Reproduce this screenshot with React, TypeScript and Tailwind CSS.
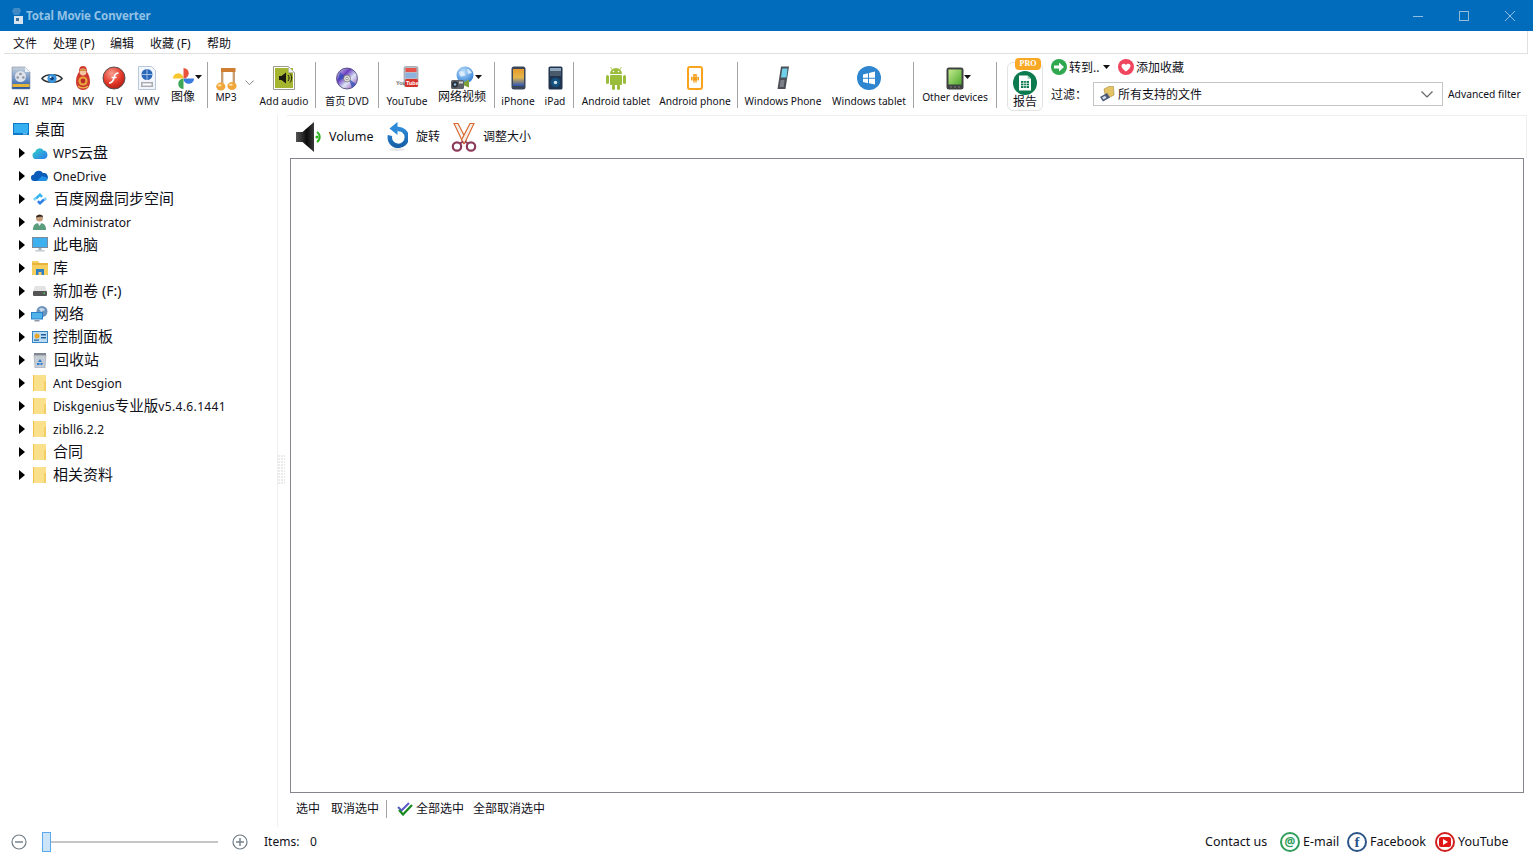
import React from "react";

const Caret = ({ className = "" }: { className?: string }) => (
  <svg width="7" height="4" viewBox="0 0 7 4" className={className}><path d="M0 0h7L3.500 4z" fill="#111" /></svg>
);

const Avi = () => (
  <svg width="20" height="24" viewBox="0 0 20 24">
    <defs><linearGradient id="av" x1="0" y1="0" x2="0" y2="1"><stop offset="0" stopColor="#c9d2dc" /><stop offset="0.55" stopColor="#6f93c6" /><stop offset="1" stopColor="#1f4f9c" /></linearGradient></defs>
    <path d="M1 1h13l5 5v17H1z" fill="url(#av)" stroke="#7f8ea3" strokeWidth=".6" />
    <path d="M14 1v5h5z" fill="#eef1f5" />
    <circle cx="9.500" cy="10.500" r="5.500" fill="#dfe3e8" />
    <circle cx="9.500" cy="8" r="1.300" fill="#8e97a3" /><circle cx="6.700" cy="11.500" r="1.300" fill="#8e97a3" /><circle cx="12.300" cy="11.500" r="1.300" fill="#8e97a3" />
    <rect x="1.500" y="18" width="17" height="3" fill="#e5b53a" />
  </svg>
);
const Eye = () => (
  <svg width="22" height="13" viewBox="0 0 24 14">
    <path d="M1 7C5 1.500 19 1.500 23 7 19 12.500 5 12.500 1 7z" fill="#fff" stroke="#333" strokeWidth="1.600" />
    <circle cx="12" cy="7" r="5" fill="#3a94dc" /><circle cx="12" cy="7" r="2" fill="#0d3f7a" /><circle cx="10.500" cy="5.500" r="1" fill="#fff" />
  </svg>
);
const Mkv = () => (
  <svg width="14" height="24" viewBox="0 0 14 24">
    <path d="M7 0C3.500 0 3 3 3 6 1.500 8 0 11 0 16c0 5 3 8 7 8s7-3 7-8c0-5-1.500-8-3-10 0-3-.5-6-4-6z" fill="#cf3a2e" />
    <circle cx="7" cy="6" r="3.400" fill="#f3c6a4" /><path d="M3.600 5C4 2.600 10 2.600 10.400 5z" fill="#d28a2c" />
    <ellipse cx="7" cy="15" rx="4.600" ry="4.600" fill="#e9a33b" /><circle cx="7" cy="15" r="2.400" fill="#b92c2a" />
    <path d="M2 20c2 2.400 8 2.400 10 0" stroke="#e9b54d" strokeWidth="1.200" fill="none" />
  </svg>
);
const Flv = () => (
  <svg width="24" height="24" viewBox="0 0 24 24">
    <defs><radialGradient id="fl" cx=".4" cy=".3" r=".8"><stop offset="0" stopColor="#f8a090" /><stop offset=".55" stopColor="#e5392a" /><stop offset="1" stopColor="#a5160f" /></radialGradient></defs>
    <circle cx="12" cy="12" r="11" fill="url(#fl)" stroke="#555" strokeWidth="1" />
    <path d="M7 17c3.500 0 4.500-2.500 5.200-6 .5-2.500 1.800-4 4.300-4M9.500 11.500h5" stroke="#fff" strokeWidth="1.500" fill="none" />
  </svg>
);
const Wmv = () => (
  <svg width="18" height="24" viewBox="0 0 18 24">
    <path d="M.5.5h13l4 4v19H.5z" fill="#f2f5f9" stroke="#b8c7dc" />
    <circle cx="9" cy="8.500" r="5.500" fill="#2d67b8" /><path d="M9 3v11M3.500 8.500h11" stroke="#bcd6f3" strokeWidth=".8" />
    <rect x="3" y="16" width="12" height="5" fill="#a9adb3" /><rect x="4.500" y="17.500" width="9" height="2" fill="#fff" />
  </svg>
);
const Pinwheel = () => (
  <svg width="23" height="23" viewBox="0 0 24 24">
    <path d="M12 12V1a5.500 5.500 0 0 1 0 11z" fill="#e8523c" />
    <path d="M12 12h11a5.500 5.500 0 0 1-11 0z" fill="#3a7be0" />
    <path d="M12 12v11a5.500 5.500 0 0 1 0-11z" fill="#3fa857" />
    <path d="M12 12H1a5.500 5.500 0 0 1 11 0z" fill="#f7c52d" />
  </svg>
);
const Mp3 = () => (
  <svg width="21" height="25" viewBox="0 0 21 25">
    <path d="M5 3h14v17h-2.400V5.500H7.400V21H5z" fill="#c9a074" /><rect x="5" y="2" width="14.500" height="4" fill="#d07f32" />
    <ellipse cx="4.800" cy="20.500" rx="4.600" ry="4" fill="#f0a63a" /><ellipse cx="16" cy="20" rx="4.600" ry="4" fill="#f0a63a" />
    <ellipse cx="3.600" cy="19.300" rx="1.800" ry="1.200" fill="#fbdc9b" /><ellipse cx="14.800" cy="18.800" rx="1.800" ry="1.200" fill="#fbdc9b" />
  </svg>
);
const AddAudio = () => (
  <svg width="22" height="24" viewBox="0 0 22 24">
    <path d="M.5.500h15l6 6v17H.500z" fill="#fff" stroke="#9a9a8a" />
    <rect x="2" y="2" width="18" height="20" fill="#a6b52f" /><path d="M15.500.500v6h6z" fill="#eee" stroke="#aaa" strokeWidth=".5" />
    <path d="M6 10h2.500L13 6.500v11L8.500 14H6z" fill="#1a1a10" />
    <path d="M15 9c1.400 1.500 1.400 4.500 0 6M17 7.500c2.200 2.400 2.200 6.600 0 9" stroke="#1a1a10" strokeWidth="1" fill="none" />
  </svg>
);
const Dvd = () => (
  <svg width="22" height="23" viewBox="0 0 22 23">
    <defs><linearGradient id="dv" x1="0" y1="0" x2="1" y2="1"><stop offset="0" stopColor="#e8e8f4" /><stop offset=".35" stopColor="#6a3fc0" /><stop offset=".6" stopColor="#dfe7f7" /><stop offset="1" stopColor="#7a2aa8" /></linearGradient></defs>
    <circle cx="11" cy="11.500" r="10.500" fill="url(#dv)" stroke="#3c3c70" strokeWidth=".8" />
    <path d="M4 5l6 6-8 2zM13 12l7 5-4 4z" fill="#2b4fb8" opacity=".75" />
    <circle cx="11" cy="11.500" r="3.500" fill="#ddd" stroke="#555" strokeWidth=".6" /><circle cx="11" cy="11.500" r="1.300" fill="#fff" stroke="#444" strokeWidth=".5" />
  </svg>
);
const YtDevice = () => (
  <svg width="24" height="24" viewBox="0 0 24 24">
    <rect x="9" y="0.500" width="14" height="20" rx="1.500" fill="#b9bec6" stroke="#8a8f99" strokeWidth=".6" />
    <rect x="10.500" y="2" width="11" height="4" fill="#e6534a" /><rect x="10.500" y="7" width="11" height="5" fill="#8cb2dd" />
    <text x="1" y="18.700" fontSize="5.500" fontWeight="700" fill="#666" fontFamily="Liberation Sans">You</text>
    <rect x="10" y="13" width="13" height="8" rx="1.500" fill="#d8332b" />
    <text x="11" y="19" fontSize="5.500" fontWeight="700" fill="#fff" fontFamily="Liberation Sans">Tube</text>
  </svg>
);
const WebVideo = () => (
  <svg width="25" height="24" viewBox="0 0 25 24">
    <defs><radialGradient id="gb" cx=".4" cy=".3" r=".8"><stop offset="0" stopColor="#bfe0fb" /><stop offset="1" stopColor="#1f74d2" /></radialGradient></defs>
    <circle cx="15" cy="9" r="8.500" fill="url(#gb)" />
    <path d="M9 6c3-2 5 0 6 2s-3 3-5 2zM17 3c2 0 4 2 5 4l-4 1z" fill="#e3f1ff" opacity=".85" />
    <rect x="1" y="14" width="13" height="9" rx="1.500" fill="#5c6068" /><circle cx="5" cy="18.500" r="3" fill="#2a2d33" /><circle cx="5" cy="18.500" r="1.300" fill="#8ab8e0" />
    <path d="M14 16l5-2.500v8L14 19.500z" fill="#7fa03a" />
    <rect x="9" y="15.500" width="4" height="2" fill="#cfd3d9" />
  </svg>
);
const Iphone = () => (
  <svg width="15" height="24" viewBox="0 0 15 24">
    <defs><linearGradient id="ip" x1="0" y1="0" x2="0" y2="1"><stop offset="0" stopColor="#e89a2b" /><stop offset=".5" stopColor="#e5b64a" /><stop offset="1" stopColor="#2a54b5" /></linearGradient></defs>
    <rect x=".5" y=".5" width="14" height="23" rx="2.500" fill="#3a4658" /><rect x="2" y="3" width="11" height="17" fill="url(#ip)" />
  </svg>
);
const Ipad = () => (
  <svg width="15" height="24" viewBox="0 0 15 24">
    <rect x=".5" y=".5" width="14" height="23" rx="1.500" fill="#20344f" />
    <rect x="2" y="2" width="11" height="8" fill="#4a5a6a" /><rect x="2" y="2" width="11" height="3" fill="#90a6bd" />
    <circle cx="7.500" cy="16.500" r="4.800" fill="#16507d" /><circle cx="7.500" cy="16.500" r="1.800" fill="#cfe1f0" />
  </svg>
);
const AndroidBot = ({ color, w, h }: { color: string; w: number; h: number }) => (
  <svg width={w} height={h} viewBox="0 0 20 24">
    <path d="M4 8a6 6 0 0 1 12 0z" fill={color} /><path d="M6 3.500L4.500 1M14 3.500L15.500 1" stroke={color} strokeWidth=".8" />
    <circle cx="7.500" cy="5.500" r=".8" fill="#fff" /><circle cx="12.500" cy="5.500" r=".8" fill="#fff" />
    <rect x="4" y="9" width="12" height="10" rx="1" fill={color} />
    <rect x="0" y="9" width="3" height="9" rx="1.500" fill={color} /><rect x="17" y="9" width="3" height="9" rx="1.500" fill={color} />
    <rect x="6" y="18" width="3" height="6" rx="1.500" fill={color} /><rect x="11" y="18" width="3" height="6" rx="1.500" fill={color} />
  </svg>
);
const AndroidPhone = () => (
  <div className="relative w-[16px] h-[24px] rounded-[3px] border-2 border-[#f9a41c] flex items-center justify-center">
    <AndroidBot color="#f59b15" w={8} h={10} />
  </div>
);
const WinPhone = () => (
  <svg width="14" height="24" viewBox="0 0 14 24">
    <path d="M5 .500h8L9.500 23H1.500z" fill="#4c5056" /><path d="M6.300 2.500h5.200l-1 9H5z" fill="#6fd0ea" /><path d="M4.500 14h4l-.8 7h-4z" fill="#7d8187" />
  </svg>
);
const WinLogo = ({ size = 24 }: { size?: number }) => (
  <svg width={size} height={size} viewBox="0 0 24 24">
    <circle cx="12" cy="12" r="12" fill="#2d86cf" />
    <path d="M6 8.500l5-1.200v4.400H6zM12 7l6-1.500v6.200h-6zM6 12.800h5v4.400L6 16zM12 12.800h6v5.700l-6-1.300z" fill="#fff" />
  </svg>
);
const Tablet = () => (
  <svg width="18" height="23" viewBox="0 0 18 23">
    <defs><linearGradient id="tb" x1="0" y1="0" x2="1" y2="1"><stop offset="0" stopColor="#c4ec8e" /><stop offset="1" stopColor="#4fa82e" /></linearGradient></defs>
    <rect x=".5" y=".5" width="17" height="22" rx="2.500" fill="#3f4240" /><rect x="2.500" y="2.500" width="13" height="15" fill="url(#tb)" />
    <circle cx="5" cy="20" r=".7" fill="#999" /><circle cx="9" cy="20" r=".7" fill="#999" /><circle cx="13" cy="20" r=".7" fill="#999" />
  </svg>
);
const Report = () => (
  <svg width="24" height="24" viewBox="0 0 24 24">
    <circle cx="12" cy="12" r="12" fill="#0b7b4f" />
    <path d="M6 4.500h8.500L18 8v11.500H6z" fill="#fff" /><path d="M14.500 4.500V8H18z" fill="#a7d8c0" />
    <rect x="8" y="10" width="8" height="7" fill="#0b7b4f" />
    <path d="M8 12.300h8M8 14.600h8M10.700 10v7M13.300 10v7" stroke="#fff" strokeWidth=".7" />
  </svg>
);
const GoArrow = () => (
  <svg width="16" height="16" viewBox="0 0 16 16">
    <circle cx="8" cy="8" r="8" fill="#2fa84f" /><path d="M3 6.500h5V3.500L13 8l-5 4.500v-3H3z" fill="#fff" />
  </svg>
);
const Heart = () => (
  <svg width="16" height="16" viewBox="0 0 16 16">
    <circle cx="8" cy="8" r="8" fill="#f0455f" /><path d="M8 12.500C4 9.500 3.500 8 3.500 6.700 3.500 4.600 6.700 3.800 8 6c1.300-2.200 4.500-1.400 4.500.7 0 1.300-.5 2.800-4.500 5.800z" fill="#fff" />
  </svg>
);
const FilmFolder = () => (
  <svg width="16" height="16" viewBox="0 0 16 16">
    <path d="M5 3l5-2.500h4.500L15 9l-8 4z" fill="#e3c364" stroke="#a88a35" strokeWidth=".6" />
    <path d="M1 11l7-4 3 4.500-7 4z" fill="#4a5a7a" /><path d="M3 11.500l3-1.800 1.500 2-3 1.800z" fill="#d6dde8" />
  </svg>
);
const Chevron = ({ w = 12, color = "#777" }: { w?: number; color?: string }) => (
  <svg width={w} height={w / 2 + 1} viewBox="0 0 12 7"><path d="M.5.500L6 6l5.500-5.500" fill="none" stroke={color} strokeWidth="1.200" /></svg>
);
const TreeArrow = () => (
  <svg width="6" height="10" viewBox="0 0 6 10" className="shrink-0"><path d="M0 0l6 5-6 5z" fill="#000" /></svg>
);

const Desktop = () => (
  <svg width="16" height="12" viewBox="0 0 16 12"><rect width="16" height="12" fill="#0f78c6" /><rect x="1" y="1" width="14" height="9" fill="#36b0f0" /><rect x="10" y="10.500" width="4" height=".8" fill="#cfe9fb" /></svg>
);
const WpsCloud = () => (
  <svg width="16" height="12" viewBox="0 0 16 12"><defs><linearGradient id="wp" x1="0" y1="0" x2="1" y2="1"><stop offset="0" stopColor="#33d4c4" /><stop offset="1" stopColor="#2a78ee" /></linearGradient></defs><path d="M4 12a3.500 3.500 0 0 1-.8-6.900A4.500 4.500 0 0 1 11.500 3.500 4.300 4.300 0 0 1 12 12z" fill="url(#wp)" /></svg>
);
const OneDrive = () => (
  <svg width="17" height="11" viewBox="0 0 17 11"><path d="M3.500 11a3.300 3.300 0 0 1-.5-6.600A5 5 0 0 1 12 3a4 4 0 0 1 1.500 8z" fill="#0a5cb8" /><path d="M6 11l5-5 4.500 1.500c1.500 1 1 3.500-1.500 3.500z" fill="#1f8fe6" /></svg>
);
const Baidu = () => (
  <svg width="14" height="12" viewBox="0 0 14 12"><path d="M7 0l3 3-1.800 1.800L7 3.500 3.800 6.500l-1.800-1.700z" fill="#35b4f0" /><path d="M7 12L4 9l1.800-1.800L7 8.500l3.200-3 1.800 1.700z" fill="#2a7fe8" /><path d="M0 6l2-2 1 2-1 2zM14 6l-2-2-1 2 1 2z" fill="#6fd0f7" /></svg>
);
const User = () => (
  <svg width="13" height="16" viewBox="0 0 13 16"><circle cx="6.500" cy="4" r="3.500" fill="#c49a78" /><path d="M3 3.500C3 0 10 0 10 3 8 2.500 5 3 3 3.500z" fill="#2f2620" /><path d="M0 16c0-6 3-7 6.500-7S13 10 13 16z" fill="#5b9d7c" /><path d="M4.500 9l2 3 2-3z" fill="#eee" /></svg>
);
const Pc = () => (
  <svg width="16" height="15" viewBox="0 0 16 15"><rect width="16" height="11" fill="#7a8c9c" /><rect x="1" y="1" width="14" height="9" fill="#3fb0ee" /><rect x="6.500" y="11" width="3" height="2" fill="#a8b4bf" /><rect x="3.500" y="13" width="9" height="1.500" fill="#c4ccd3" /></svg>
);
const Library = () => (
  <svg width="16" height="15" viewBox="0 0 16 15"><path d="M0 1h6l1.500 2H16v12H0z" fill="#f6cf5f" /><rect y="3" width="16" height="2" fill="#e8b43f" /><path d="M4 15V9h8v6h-2.500v-3h-3v3z" fill="#2f7fc4" /></svg>
);
const Drive = () => (
  <svg width="14" height="10" viewBox="0 0 14 10"><path d="M2 0h10l2 5H0z" fill="#e3e3e3" /><rect y="5" width="14" height="5" rx="1" fill="#555" /><rect x="10.500" y="6.500" width="1.500" height="1.500" fill="#4ccf5a" /></svg>
);
const Network = () => (
  <svg width="17" height="16" viewBox="0 0 17 16"><circle cx="11" cy="5.500" r="5.500" fill="#6d93ba" /><path d="M8 3c2-2 5-1 6 1l-4 2z" fill="#c6d9ec" /><rect x="0" y="6" width="12" height="7.500" fill="#2a81c8" /><rect x="1" y="7" width="10" height="5.500" fill="#4fb3ea" /><rect x="3.500" y="14" width="5" height="1.500" fill="#8d9aa6" /></svg>
);
const Panel = () => (
  <svg width="16" height="12" viewBox="0 0 16 12"><rect width="16" height="12" fill="#3a86c6" /><rect x="1" y="1" width="14" height="10" fill="#bcdcf2" /><circle cx="5" cy="5" r="2.500" fill="#e9a62b" /><rect x="9" y="3" width="5" height="1.500" fill="#1f5f9a" /><rect x="9" y="6" width="5" height="1.500" fill="#1f5f9a" /><rect x="2" y="8.500" width="5" height="1.200" fill="#1f5f9a" /></svg>
);
const Trash = () => (
  <svg width="14" height="16" viewBox="0 0 14 16"><path d="M1 3h12l-1 13H2z" fill="#c6ccd4" stroke="#9aa3ad" strokeWidth=".6" /><rect x="1" y="1" width="12" height="2.200" fill="#7f8790" /><path d="M5 10l2-3 2 3zM4 11h2.500v2H4zM7.500 11H10l-1 2H7.500z" fill="#2f7dd0" /></svg>
);
const Folder = () => (
  <svg width="13" height="16" viewBox="0 0 13 16"><rect width="13" height="16" fill="#fbe08b" /><path d="M.5 0v16" stroke="#f0c350" /><path d="M11 6v10h2V6z" fill="#f3cf63" /></svg>
);

const Speaker = () => (
  <svg width="27" height="30" viewBox="0 0 27 30">
    <defs><linearGradient id="sp" x1="0" y1="0" x2="1" y2="0"><stop offset="0" stopColor="#555" /><stop offset=".6" stopColor="#0c0c0c" /><stop offset="1" stopColor="#3a3a3a" /></linearGradient></defs>
    <path d="M0 10h6.500L18 0v30L6.500 20H0z" fill="url(#sp)" />
    <path d="M21 10a6 6 0 0 1 0 10" stroke="#2eb51e" strokeWidth="2" fill="none" /><circle cx="21" cy="15" r="1.600" fill="#2eb51e" />
  </svg>
);
const Rotate = () => (
  <svg width="22" height="30" viewBox="0 0 22 30">
    <defs><linearGradient id="ro" x1="0" y1="0" x2="0" y2="1"><stop offset="0" stopColor="#2d8ad8" /><stop offset="1" stopColor="#165fa8" /></linearGradient></defs>
    <path d="M4 13.500A8.500 8.500 0 1 0 11 7" fill="none" stroke="url(#ro)" strokeWidth="4.500" />
    <path d="M11.500 0v13L3.500 6.500z" fill="#2d8ad8" />
    <ellipse cx="11" cy="27.500" rx="8" ry="1.500" fill="#e6e6e6" />
  </svg>
);
const Scissors = () => (
  <svg width="26" height="29" viewBox="0 0 26 29">
    <path d="M3 .500L7 .500 15.500 17 12.500 20.500z" fill="#f3eeea" stroke="#d8662a" strokeWidth="1.100" />
    <path d="M23 .500L19 .500 10.500 17 13.500 20.500z" fill="#f3eeea" stroke="#d8662a" strokeWidth="1.100" />
    <circle cx="6" cy="23.500" r="4.200" fill="none" stroke="#8c3a5c" strokeWidth="2.200" /><circle cx="20" cy="23.500" r="4.200" fill="none" stroke="#8c3a5c" strokeWidth="2.200" />
    <path d="M9 20.500l3-2M17 20.500l-3-2" stroke="#8c3a5c" strokeWidth="2" />
  </svg>
);
const Checks = () => (
  <svg width="16" height="14" viewBox="0 0 16 14">
    <path d="M1 5l3.500 3.500L12 1" stroke="#5a5ac8" strokeWidth="2" fill="none" />
    <path d="M2 8l4 4.500L15 3" stroke="#178a1e" strokeWidth="2.200" fill="none" />
  </svg>
);
const ZoomBtn = ({ plus }: { plus?: boolean }) => (
  <svg width="16" height="16" viewBox="0 0 16 16">
    <circle cx="8" cy="8" r="7" fill="#fff" stroke="#6f7c86" strokeWidth="1.200" />
    <path d="M4 8h8" stroke="#6f7c86" strokeWidth="1.400" />{plus && <path d="M8 4v8" stroke="#6f7c86" strokeWidth="1.400" />}
  </svg>
);
const Ring = ({ color, children }: { color: string; children: React.ReactNode }) => (
  <div className="w-[20px] h-[20px] rounded-full border-2 flex items-center justify-center shrink-0" style={{ borderColor: color }}>{children}</div>
);

const Sep = ({ className = "" }: { className?: string }) => <div className={`w-px h-[46px] mt-[8px] bg-[#a3a3a3] shrink-0 ${className}`} />;

function Tool({ w, label, icon, high, caret, cjk }: { w: string; label: string; icon: React.ReactNode; high?: boolean; caret?: boolean; cjk?: boolean }) {
  return (
    <div className={`${w} shrink-0 flex flex-col items-center pt-[12px]`}>
      <div className="relative h-[24px] flex items-center justify-center">
        {icon}
        {caret && <Caret className="absolute left-full top-[9px]" />}
      </div>
      <span className={`h-[16px] leading-[16px] whitespace-nowrap ${cjk ? "text-[12px]" : "text-[10.200px]"} ${high ? "-mt-px" : "mt-[3px]"}`}>{label}</span>
    </div>
  );
}

const Latin = ({ children, className = "" }: { children: React.ReactNode; className?: string }) => <span className={`pt-[2px] ${className}`}>{children}</span>;

const tree: { icon: React.ReactNode; text: React.ReactNode }[] = [
  { icon: <WpsCloud />, text: <><Latin>WPS</Latin><span className="text-[15px]">云盘</span></> },
  { icon: <OneDrive />, text: <Latin>OneDrive</Latin> },
  { icon: <Baidu />, text: <span className="text-[15px] ml-px">百度网盘同步空间</span> },
  { icon: <User />, text: <Latin>Administrator</Latin> },
  { icon: <Pc />, text: <span className="text-[15px]">此电脑</span> },
  { icon: <Library />, text: <span className="text-[15px]">库</span> },
  { icon: <Drive />, text: <><span className="text-[15px]">新加卷</span><span className="text-[14px] ml-[4px]">(F:)</span></> },
  { icon: <Network />, text: <span className="text-[15px] ml-px">网络</span> },
  { icon: <Panel />, text: <span className="text-[15px]">控制面板</span> },
  { icon: <Trash />, text: <span className="text-[15px] ml-px">回收站</span> },
  { icon: <Folder />, text: <Latin>Ant Desgion</Latin> },
  { icon: <Folder />, text: <><Latin>Diskgenius</Latin><span className="text-[14.500px]">专业版</span><Latin className="tracking-[0.35px]">v5.4.6.1441</Latin></> },
  { icon: <Folder />, text: <Latin className="tracking-[0.2px]">zibll6.2.2</Latin> },
  { icon: <Folder />, text: <span className="text-[15px]">合同</span> },
  { icon: <Folder />, text: <span className="text-[15px]">相关资料</span> },
];

export default function App() {
  return (
    <div className="w-[1533px] h-[862px] overflow-hidden bg-white flex flex-col text-[12px] text-[#101018] font-['Noto_Sans','Noto_Sans_CJK_SC',sans-serif]">
      {/* title bar */}
      <div className="h-[31px] shrink-0 bg-[#016cbc] flex items-center pl-[11px]">
        <svg width="12" height="16" viewBox="0 0 12 16"><path d="M3 0h6l1 3-2 4H3L1 3z" fill="#3f8ac6" /><rect x="3" y="8" width="9" height="8" fill="#d5e4ef" /><rect x="5" y="10" width="3" height="3" fill="#3a6f9b" /></svg>
        <span className="ml-[3px] text-[#93c1e4] font-bold text-[11.500px] tracking-[-0.1px]">Total Movie Converter</span>
        <div className="ml-auto flex text-[#8fbee3]">
          <div className="w-[46px] h-[31px] flex items-center justify-center"><svg width="10" height="10" viewBox="0 0 10 10"><path d="M0 5.500h10" stroke="currentColor" /></svg></div>
          <div className="w-[46px] h-[31px] flex items-center justify-center"><svg width="10" height="10" viewBox="0 0 10 10"><rect x=".5" y=".5" width="9" height="9" fill="none" stroke="currentColor" /></svg></div>
          <div className="w-[46px] h-[31px] flex items-center justify-center"><svg width="10" height="10" viewBox="0 0 10 10"><path d="M0 0l10 10M10 0L0 10" stroke="currentColor" /></svg></div>
        </div>
      </div>
      {/* menu */}
      <div className="h-[23px] shrink-0 ml-[4px] mr-[5px] pl-[9px] border-b border-r border-[#e0e0e0] flex items-center pt-[3px]">
        <span className="w-[40px]">文件</span>
        <span className="w-[57px]">处理 (P)</span>
        <span className="w-[40px]">编辑</span>
        <span className="w-[57px]">收藏 (F)</span>
        <span>帮助</span>
      </div>
      {/* main toolbar */}
      <div className="h-[61px] shrink-0 flex pl-[6px]">
        <Tool w="w-[30px]" label="AVI" icon={<Avi />} />
        <Tool w="w-[32px]" label="MP4" icon={<Eye />} />
        <Tool w="w-[30px]" label="MKV" icon={<Mkv />} />
        <Tool w="w-[32px]" label="FLV" icon={<Flv />} />
        <Tool w="w-[34px]" label="WMV" icon={<Wmv />} />
        <Tool w="w-[38px]" label="图像" icon={<Pinwheel />} high caret cjk />
        <Sep className="ml-[5px]" />
        <Tool w="w-[36px]" label="MP3" icon={<Mp3 />} high />
        <div className="w-[10px] shrink-0 pt-[26px] flex justify-center"><Chevron w={9} /></div>
        <Tool w="w-[60px]" label="Add audio" icon={<AddAudio />} />
        <Sep className="ml-px" />
        <Tool w="w-[62px]" label="首页 DVD" icon={<Dvd />} />
        <Sep />
        <Tool w="w-[56px]" label="YouTube" icon={<YtDevice />} />
        <Tool w="w-[54px]" label="网络视频" icon={<WebVideo />} high caret cjk />
        <Sep className="ml-[5px]" />
        <Tool w="w-[46px]" label="iPhone" icon={<Iphone />} />
        <Tool w="w-[28px]" label="iPad" icon={<Ipad />} />
        <Sep className="ml-[4px]" />
        <Tool w="w-[82px] ml-px" label="Android tablet" icon={<AndroidBot color="#9bbd3c" w={20} h={24} />} />
        <Tool w="w-[76px]" label="Android phone" icon={<AndroidPhone />} />
        <Sep className="ml-[4px]" />
        <Tool w="w-[90px]" label="Windows Phone" icon={<WinPhone />} />
        <Tool w="w-[82px]" label="Windows tablet" icon={<WinLogo />} />
        <Sep className="ml-[3px]" />
        <Tool w="w-[82px]" label="Other devices" icon={<Tablet />} high caret />
        <Sep />
        <div className="relative ml-[10px] mt-[8px] w-[36px] h-[49px] shrink-0 rounded-[6px] border border-[#e2e2e2] flex flex-col items-center pt-[8px]">
          <Report />
          <span className="text-[12px] leading-[16px] mt-[-1px]">报告</span>
          <span className="absolute left-[7px] top-[-5px] w-[26px] h-[12px] rounded-[4px] bg-[#f9a825] text-white text-[8px] leading-[12px] font-bold text-center font-['Liberation_Serif',serif]">PRO</span>
        </div>
        <div className="ml-[8px] flex flex-col shrink-0">
          <div className="h-[26px] flex items-center">
            <GoArrow />
            <span className="ml-[2px] w-[34px] whitespace-nowrap pt-[2px]">转到..</span>
            <Caret className="mr-[8px]" />
            <Heart />
            <span className="ml-[2px] pt-[2px]">添加收藏</span>
          </div>
          <div className="mt-[2px] flex items-center">
            <span className="w-[42px] pt-[2px]">过滤：</span>
            <div className="w-[350px] h-[24px] border border-[#c4c4c4] flex items-center pl-[5px] pr-[9px]">
              <FilmFolder />
              <span className="ml-[3px] pt-[2px]">所有支持的文件</span>
              <span className="ml-auto"><Chevron w={12} color="#666" /></span>
            </div>
            <span className="ml-[5px] pt-[2px] whitespace-nowrap text-[10.300px]">Advanced filter</span>
          </div>
        </div>
      </div>
      {/* body */}
      <div className="flex-1 min-h-0 flex">
        <div className="w-[278px] shrink-0 border-r border-[#f0f0f0] pt-[2px] pl-[13px]">
          <div className="h-[24px] flex items-center">
            <Desktop />
            <span className="ml-[6px] text-[15px]">桌面</span>
          </div>
          {tree.map((r, i) => (
            <div key={i} className="h-[23px] flex items-center ml-[6px]">
              <TreeArrow />
              <div className="w-[17px] ml-[6px] flex justify-center shrink-0">{r.icon}</div>
              <div className="ml-[5px] whitespace-nowrap flex items-center">{r.text}</div>
            </div>
          ))}
        </div>
        <div className="w-[9px] shrink-0 flex items-center">
          <svg width="7" height="30" viewBox="0 0 7 30" className="mt-[-2px]">
            <defs><pattern id="dots" width="3" height="3" patternUnits="userSpaceOnUse"><rect width="2" height="2" fill="#eaeaea" /></pattern></defs>
            <rect width="7" height="30" fill="url(#dots)" />
          </svg>
        </div>
        <div className="w-[1240px] shrink-0 flex flex-col">
          <div className="h-[43px] shrink-0 border-t border-r border-[#eeeeee] flex items-center pl-[9px]">
            <Speaker />
            <span className="ml-[6px] w-[57px] text-[12.500px] whitespace-nowrap">Volume</span>
            <Rotate />
            <span className="ml-[8px] w-[35px]">旋转</span>
            <Scissors />
            <span className="ml-[6px]">调整大小</span>
          </div>
          <div className="flex-1 min-h-0 mx-[3px] border border-[#85858e] bg-white" />
          <div className="h-[34px] shrink-0 flex items-center pl-[9px] pb-[2px]">
            <span className="w-[35px]">选中</span>
            <span className="w-[55px]">取消选中</span>
            <div className="w-px h-[18px] bg-[#a3a3a3]" />
            <span className="ml-[10px]"><Checks /></span>
            <span className="ml-[3px] w-[57px]">全部选中</span>
            <span>全部取消选中</span>
          </div>
        </div>
      </div>
      {/* status */}
      <div className="h-[35px] shrink-0 flex items-center pb-[5px] pl-[11px]">
        <ZoomBtn />
        <div className="ml-[15px] w-[176px] flex items-center">
          <div className="w-[9px] h-[20px] bg-[#cce4f7] border border-[#5aa9ee] shrink-0" />
          <div className="flex-1 h-[2px] bg-[#c6c6c6]" />
        </div>
        <span className="ml-[14px]"><ZoomBtn plus /></span>
        <span className="ml-[16px] w-[46px]">Items:</span>
        <span>0</span>
        <div className="ml-auto flex items-center pr-[24px] text-[12.500px]">
          <span className="w-[75px] whitespace-nowrap">Contact us</span>
          <Ring color="#2f9e5a"><span className="text-[12px] leading-none font-bold text-[#2f9e5a]">@</span></Ring>
          <span className="ml-[3px] w-[44px]">E-mail</span>
          <Ring color="#2c5488"><span className="text-[15px] leading-none font-bold text-[#2c5488] font-['Liberation_Serif',serif]">f</span></Ring>
          <span className="ml-[3px] w-[65px] whitespace-nowrap">Facebook</span>
          <Ring color="#d02020"><span className="w-[12px] h-[10px] rounded-[2px] bg-[#e01515] flex items-center justify-center"><svg width="5" height="6" viewBox="0 0 5 6"><path d="M0 0l5 3-5 3z" fill="#fff" /></svg></span></Ring>
          <span className="ml-[3px] w-[51px] whitespace-nowrap">YouTube</span>
        </div>
      </div>
    </div>
  );
}
